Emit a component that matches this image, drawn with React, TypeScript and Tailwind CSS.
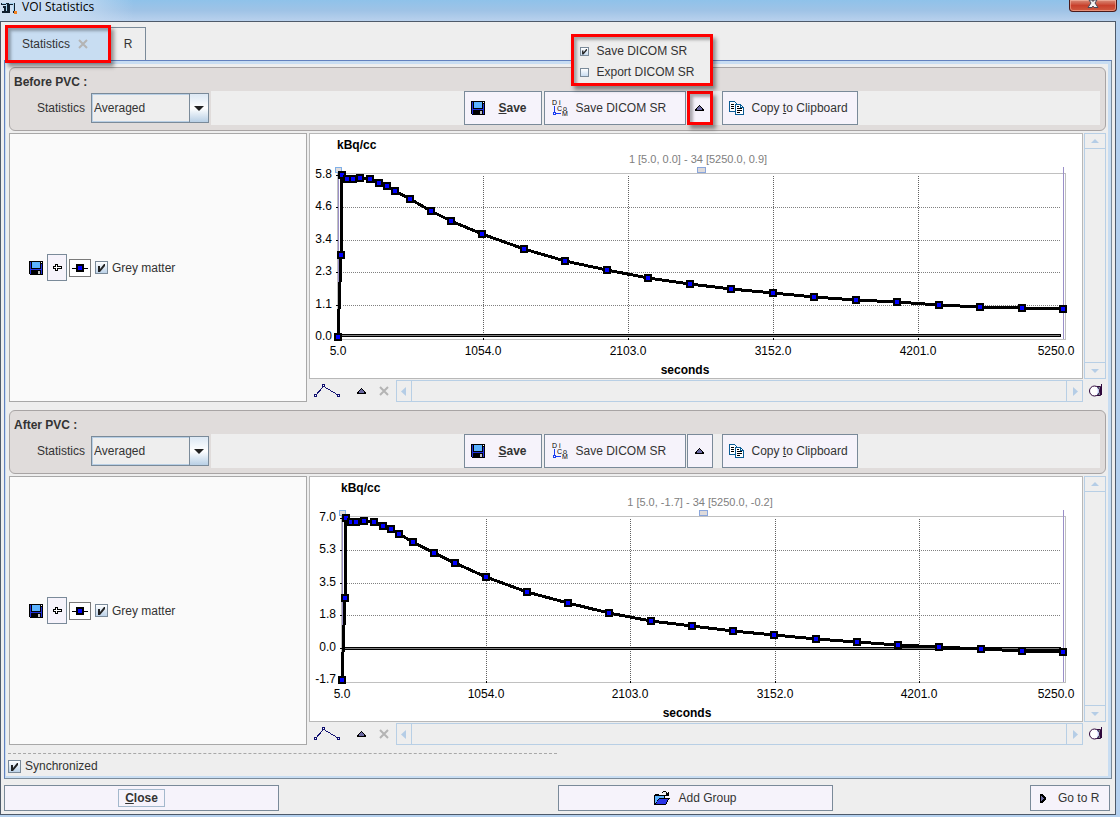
import type { ReactNode } from "react";

type Point = [number, number];

interface ChartData {
  left: number;
  yLabels: string[];
  grid: number[];
  xTicks: number[];
  zeroY: number;
  range: string;
  center: number;
  points: Point[];
}

const xLabels = ["5.0", "1054.0", "2103.0", "3152.0", "4201.0", "5250.0"];
const labelBaselines = [44, 76, 109, 141, 174, 206];

const beforeChart: ChartData = {
  left: 28,
  yLabels: ["5.8", "4.6", "3.4", "2.3", "1.1", "0.0"],
  grid: [73, 106, 138, 171],
  xTicks: [173, 318, 463, 608],
  zeroY: 201,
  range: "1 [5.0, 0.0] - 34 [5250.0, 0.9]",
  center: 388,
  points: [
    [28, 203], [31, 121], [32, 41], [37, 45], [43, 45], [50, 44], [60, 45],
    [69, 49], [77, 52], [85, 57], [100, 65], [121, 77], [141, 87], [172, 100],
    [214, 115], [255, 127], [297, 136], [338, 144], [380, 150], [421, 155],
    [463, 159], [504, 163], [546, 166], [587, 168], [629, 171], [670, 173],
    [712, 174], [753, 175],
  ],
};

const afterChart: ChartData = {
  left: 32,
  yLabels: ["7.0", "5.3", "3.5", "1.8", "0.0", "-1.7"],
  grid: [73, 106, 138],
  xTicks: [176, 320, 465, 609],
  zeroY: 171,
  range: "1 [5.0, -1.7] - 34 [5250.0, -0.2]",
  center: 390,
  points: [
    [32, 203], [35, 121], [36, 41], [41, 45], [46, 45], [54, 44], [64, 45],
    [73, 49], [81, 52], [89, 57], [103, 65], [124, 76], [145, 86], [176, 100],
    [217, 115], [258, 126], [299, 136], [341, 144], [382, 149], [423, 154],
    [464, 158], [506, 162], [547, 165], [588, 168], [629, 170], [671, 172],
    [712, 174], [753, 175],
  ],
};

const Chart = ({ data }: { data: ChartData }) => {
  const { left, points, zeroY, center } = data;
  const labelX = [left, ...data.xTicks, 746];
  return (
    <svg viewBox="0 0 772 244" className="block h-auto w-full text-[12px]" role="img">
      <g shapeRendering="crispEdges">
        <rect x={left - 0.5} y="39.5" width={756 - left} height="166" fill="none" stroke="#c0c0c0" />
        {data.grid.map((y) => (
          <line key={y} x1={left + 5} x2="751" y1={y + 0.5} y2={y + 0.5} stroke="#808080" strokeDasharray="1 1" />
        ))}
        {data.xTicks.map((x) => (
          <g key={x}>
            <line x1={x + 0.5} x2={x + 0.5} y1="42" y2="204" stroke="#606060" strokeDasharray="1 1" />
            <line x1={x + 0.5} x2={x + 0.5} y1="204" y2="206" stroke="#000" />
          </g>
        ))}
        {[41, ...data.grid, 171].map((y, i) => (
          <line key={i} x1={left - 2} x2={left} y1={y + 0.5} y2={y + 0.5} stroke="#000" />
        ))}
        <rect x={left} y={zeroY - 1} width={751 - left} height="3" fill="#000" />
        <rect x={left} y={zeroY} width={750 - left} height="1" fill="#808080" />
        <line x1={left + 0.5} x2={left + 0.5} y1="39" y2="204" stroke="#9a8fc8" />
        <line x1="753.5" x2="753.5" y1="33" y2="205" stroke="#9a8fc8" />
        <rect x={left - 2.5} y="33.5" width="6" height="5" fill="#e0dcdc" stroke="#7fb0e8" />
        <rect x={center - 0.5} y="33.5" width="8" height="5" fill="#dedada" stroke="#8aa6dc" />
        <polyline points={points.map((p) => p.join(",")).join(" ")} fill="none" stroke="#000" strokeWidth="3" />
        {points.map(([x, y]) => (
          <g key={x}>
            <rect x={x - 4} y={y - 4} width="8" height="8" fill="#000" />
            <rect x={x - 2} y={y - 2} width="4" height="4" fill="#0000ff" />
          </g>
        ))}
      </g>
      <text x={left - 1} y="15" fontWeight="bold">kBq/cc</text>
      <text x={center} y="29" textAnchor="middle" className="text-[11px]" fill="#808080">{data.range}</text>
      {data.yLabels.map((label, i) => (
        <text key={label} x={left - 6} y={labelBaselines[i]} textAnchor="end">{label}</text>
      ))}
      {xLabels.map((label, i) => (
        <text key={label} x={labelX[i]} y="221" textAnchor="middle">{label}</text>
      ))}
      <text x={center - 13} y="240" textAnchor="middle" fontWeight="bold">seconds</text>
    </svg>
  );
};

const FloppyIcon = () => (
  <svg width="14" height="14" viewBox="0 0 14 14" shapeRendering="crispEdges" className="shrink-0">
    <path d="M0 0h14v14H1v-1H0z" fill="#000" />
    <path d="M1 1h1v12H1zM12 3h1v10h-1zM2 8h10v1H2z" fill="#2233dd" />
    <path d="M3 1h8v6H3z" fill="#5cb3ff" />
    <path d="M12 1h1v1h-1z" fill="#fff" />
    <path d="M9 10h2v3H9z" fill="#c0c0c0" />
  </svg>
);

const DicomIcon = () => (
  <svg width="16" height="16" viewBox="0 0 16 16" className="shrink-0">
    <g fontSize="7" fontFamily="Liberation Sans, sans-serif" fill="#000">
      <text x="0" y="5">D</text>
      <text x="7" y="5">i</text>
      <text x="5" y="11">C</text>
      <text x="11" y="11">o</text>
      <text x="10" y="16">M</text>
    </g>
    <path d="M2 6h1v6h1v1h5v1H4v1H1v-3h1z" fill="#1a3cf0" shapeRendering="crispEdges" />
    <path d="M2 13h1v1H2z" fill="#fff" shapeRendering="crispEdges" />
  </svg>
);

const CopyIcon = () => (
  <svg width="16" height="15" viewBox="0 0 16 15" shapeRendering="crispEdges" className="shrink-0">
    <path d="M.5.5h5l2 2v8h-7z" fill="#fff" stroke="#0a5c94" />
    <path d="M2 3h3M2 5h3M2 7h3" stroke="#000" transform="translate(0 .5)" />
    <path d="M6.500 3.500h5l3 3v7h-8z" fill="#fff" stroke="#0a5c94" />
    <path d="M11.500 3.500v3h3" fill="none" stroke="#0a5c94" />
    <path d="M8 6h2M8 8h5M8 10h5M8 12h3" stroke="#000" transform="translate(0 -.5)" />
  </svg>
);

const FolderIcon = () => (
  <svg width="16" height="14" viewBox="0 0 16 14" shapeRendering="crispEdges" className="shrink-0">
    <path d="M0 4h1V3h4v1h6v3h5v1h-1v1h-1v2h-1v2h-1v1H0z" fill="#000" />
    <path d="M1 5h9v2H5v1H4v1H3v2H2v1H1z" fill="#5cb3ff" />
    <path d="M5 8h9v1h-1v2h-1v2H2v-1h1v-2h1V9h1z" fill="#2a35e8" />
    <path d="M8 1h1V0h3v1h1v1h1V1h1v4h-4V4h1V3h-1V1H9v1H8z" fill="#000" />
    <path d="M9 1h3v2H9z" fill="#eee" />
  </svg>
);

const UpIcon = () => (
  <svg width="9" height="6" viewBox="0 0 9 6" shapeRendering="crispEdges" className="shrink-0">
    <path d="M4 0h1v1h1v1h1v1h1v1h1v2H0V4h1V3h1V2h1V1h1z" fill="#000" />
    <path d="M4 1h1v1h1v1h1v2H2V3h1V2h1z" fill="#6a68a0" />
  </svg>
);

const CrossIcon = () => (
  <svg width="10" height="10" viewBox="0 0 10 10" className="shrink-0">
    <path d="M1 1l8 8M9 1L1 9" stroke="#b4b4b4" strokeWidth="2" />
  </svg>
);

const CurveIcon = () => (
  <svg width="27" height="14" viewBox="0 0 27 14" shapeRendering="crispEdges" className="shrink-0">
    <path d="M2 11L9 3M9 2l15 9" stroke="#101070" fill="none" />
    <path d="M.5 10.500h2v2h-2zM8.500.5h2v2h-2zM23.500 10.500h2v2h-2z" fill="#fff" stroke="#101070" />
  </svg>
);

const LensIcon = () => (
  <svg width="14" height="14" viewBox="0 0 14 14" className="shrink-0">
    <path d="M6 2.500h5.500v9H6z" fill="#1f6570" stroke="#30083c" />
    <path d="M12.500 0v11" stroke="#30083c" />
    <path d="M10.500 3v8" stroke="#8a8a90" />
    <circle cx="5.500" cy="7" r="5" fill="#fff" stroke="#30083c" />
    <path d="M8 4a4 4 0 0 1 0 6" fill="none" stroke="#b8c8f8" />
  </svg>
);

const ArrowGlyph = ({ dir }: { dir: "up" | "down" | "left" | "right" }) => {
  const shapes = {
    up: "M0 6l4-4 4 4z",
    down: "M0 3h8L4 7z",
    left: "M6 0v9L1 4.500z",
    right: "M2 0v9l5-4.500z",
  };
  return (
    <svg width="8" height="9" viewBox="0 0 8 9" className="shrink-0">
      <path d={shapes[dir]} fill="#b5cde6" />
    </svg>
  );
};

interface CheckBoxProps {
  label: string;
  checked?: boolean;
  small?: boolean;
}

const CheckBox = ({ label, checked = false, small = false }: CheckBoxProps) => (
  <label className={small ? "flex items-center gap-2" : "flex items-center gap-1"}>
    <span className="relative flex shrink-0">
      <input
        type="checkbox"
        defaultChecked={checked}
        className={
          small
            ? "peer size-[9px] appearance-none border border-[#7a8a99] bg-linear-to-b from-white to-[#c8dcf0]"
            : "peer size-[13px] appearance-none border border-[#7a8a99] bg-linear-to-b from-white to-[#bcd2e8]"
        }
      />
      <svg viewBox="0 0 13 13" className="pointer-events-none absolute inset-0 hidden size-full peer-checked:block">
        <path d="M3 5h2v3l4-5h1v2l-5 6H3z" fill="#222" />
      </svg>
    </span>
    {label}
  </label>
);

const ToolButton = ({ children, className = "" }: { children: ReactNode; className?: string }) => (
  <button
    type="button"
    className={`flex h-[34px] items-center border border-[#7a8a99] bg-[#f6f3fb] whitespace-nowrap ${className}`}
  >
    {children}
  </button>
);

const DicomMenu = () => (
  <div className="absolute right-0 bottom-full z-10 mb-[5px] flex w-[142px] flex-col gap-[5px] border-3 border-[#ff0000] bg-[#eeeeee] px-[6px] pt-[6px] pb-[3px] shadow-[3px_4px_4px_rgba(0,0,0,0.4),inset_3px_3px_3px_rgba(0,0,0,0.3)]">
    <CheckBox label="Save DICOM SR" checked small />
    <CheckBox label="Export DICOM SR" small />
  </div>
);

const GroupHeader = ({ title, id, menuOpen = false }: { title: string; id: string; menuOpen?: boolean }) => (
  <div className="rounded-md border border-[#a8a4a4] bg-[#e0dcdb] pr-[5px] pb-[5px] pl-1">
    <h2 className="h-[23px] pt-[6px] font-bold">{title}</h2>
    <div className="flex items-center">
      <label htmlFor={id} className="w-[77px] pr-[6px] text-right">Statistics</label>
      <div className="relative h-[30px] w-[118px] shrink-0 border border-[#7a8a99]">
        <select
          id={id}
          className="size-full appearance-none border border-[#b8cfe5] bg-[#eeeeee] pb-px pl-px outline-none"
        >
          <option>Averaged</option>
        </select>
        <span className="pointer-events-none absolute inset-y-0 right-0 flex w-[19px] items-center justify-center border-l border-[#7a8a99] bg-linear-to-b from-[#dce8f4] via-white to-[#b8cfe5]">
          <svg width="10" height="5" viewBox="0 0 10 5">
            <path d="M0 0h10L5 5z" fill="#222" />
          </svg>
        </span>
      </div>
      <div className="ml-[2px] flex h-[34px] flex-1 justify-center bg-[#eeeeee] pl-[10px]">
        <ToolButton className="w-[78px] pl-[6px] font-bold">
          <FloppyIcon />
          <span className="pl-[14px]"><u>S</u>ave</span>
        </ToolButton>
        <ToolButton className="ml-[2px] w-[142px] gap-2 pl-[7px]">
          <DicomIcon />
          Save DICOM SR
        </ToolButton>
        <div className="relative ml-px flex">
          <button
            type="button"
            aria-label="DICOM options"
            className={
              menuOpen
                ? "flex h-[34px] w-[26px] items-center justify-center border-3 border-[#ff0000] bg-[#f6f3fb] shadow-[3px_4px_4px_rgba(0,0,0,0.4),inset_3px_3px_3px_rgba(0,0,0,0.3)]"
                : "flex h-[34px] w-[26px] items-center justify-center border border-[#7a8a99] bg-[#f6f3fb]"
            }
          >
            <UpIcon />
          </button>
          {menuOpen && <DicomMenu />}
        </div>
        <ToolButton className="ml-[9px] w-[136px] gap-[7px] pl-[6px]">
          <CopyIcon />
          <span>Copy <u>t</u>o Clipboard</span>
        </ToolButton>
      </div>
    </div>
  </div>
);

const GroupBody = ({ data }: { data: ChartData }) => (
  <div className="mt-[2px] flex gap-[2px]">
    <div className="flex w-[298px] shrink-0 items-center border border-[#a8a8a8] bg-[#fafafa] pl-[19px]">
      <button type="button" aria-label="Save curve">
        <FloppyIcon />
      </button>
      <button
        type="button"
        aria-label="Move curve"
        className="ml-1 flex h-[27px] w-5 items-center justify-center border border-[#7a8a99] bg-[#f6f3fb]"
      >
        <svg width="11" height="9" viewBox="0 0 11 9" shapeRendering="crispEdges">
          <path d="M3.500 1.500h2v2h4v2h-4v2h-2v-2h-2v-2h2z" fill="#fff" stroke="#000" />
        </svg>
      </button>
      <button
        type="button"
        aria-label="Curve style"
        className="mr-1 ml-[2px] flex h-[18px] w-[22px] items-center justify-center border border-[#7a7a7a] bg-white"
      >
        <svg width="16" height="8" viewBox="0 0 16 8" shapeRendering="crispEdges">
          <path d="M0 4h16v1H0zM4 0h8v8H4z" fill="#000" />
          <path d="M6 2h4v4H6z" fill="#0000ff" />
        </svg>
      </button>
      <CheckBox label="Grey matter" checked />
    </div>
    <div className="flex min-w-0 flex-1 flex-col gap-px">
      <div className="flex gap-px">
        <div className="min-w-0 flex-1 border border-[#b8b8b8] bg-white">
          <Chart data={data} />
        </div>
        <div className="flex w-[22px] flex-col justify-between border border-[#b8cfe5]">
          <button type="button" aria-label="Scroll up" className="flex h-[15px] items-center justify-center border-b border-[#b8cfe5]">
            <ArrowGlyph dir="up" />
          </button>
          <button type="button" aria-label="Scroll down" className="flex h-4 items-center justify-center border-t border-[#b8cfe5]">
            <ArrowGlyph dir="down" />
          </button>
        </div>
      </div>
      <div className="flex h-[22px] items-center pl-[5px]">
        <button type="button" aria-label="Curve"><CurveIcon /></button>
        <button type="button" aria-label="Curve options" className="ml-4"><UpIcon /></button>
        <button type="button" aria-label="Remove curve" className="mr-[7px] ml-[13px]"><CrossIcon /></button>
        <div className="flex h-full flex-1 justify-between border border-[#b8cfe5]">
          <button type="button" aria-label="Scroll left" className="flex w-[15px] items-center justify-center border-r border-[#b8cfe5]">
            <ArrowGlyph dir="left" />
          </button>
          <button type="button" aria-label="Scroll right" className="flex w-4 items-center justify-center border-l border-[#b8cfe5]">
            <ArrowGlyph dir="right" />
          </button>
        </div>
        <button type="button" aria-label="Properties" className="mr-[3px] ml-[6px]"><LensIcon /></button>
      </div>
    </div>
  </div>
);

const TitleBar = () => (
  <header className="flex h-[21px] items-start justify-between bg-linear-to-b from-[#8fc2ea] via-[#9fc3e6] to-[#b9d1ed]">
    <div className="flex h-full items-start gap-[5px] bg-linear-to-r from-[#cfe0f2] via-[#c8dcf2] to-transparent pr-10">
      <svg width="17" height="12" viewBox="0 0 17 12" shapeRendering="crispEdges" className="mt-[2px]">
        <path d="M1 1.500h6v8H2M3 4.500h2v5M9 10.500v-9h5v8h2M9 1.500h5" fill="none" stroke="#102030" strokeWidth="2" />
        <path d="M2 1h4v1H2zM6 2h1v7H6zM9 1h5v1H9zM13 2h1v7h-1z" fill="#a8d4f0" />
        <path d="M14 9h3v3h-3z" fill="#f08020" />
      </svg>
      <span className="font-['Open_Sans',sans-serif] text-[12px] leading-[14px] text-black">VOI Statistics</span>
    </div>
    <button
      type="button"
      aria-label="Close window"
      className="mr-[3px] flex h-3 w-12 justify-center rounded-b border border-t-0 border-[#4a1a1a] bg-linear-to-b from-[#d88a78] via-[#c8402c] to-[#d05a40] shadow-[inset_0_0_0_1px_rgba(255,200,180,0.5)]"
    >
      <svg width="12" height="8" viewBox="0 0 12 8">
        <path d="M1 7.500h4L6 6l1 1.500h4L8 3l2-3H7L6 1.500 5 0H2l2 3z" fill="#f4f4f4" stroke="#4a4a58" />
      </svg>
    </button>
  </header>
);

export default function App() {
  return (
    <div className="flex min-h-screen flex-col bg-[#b4d0ee] pb-[2px] font-['Liberation_Sans',Arial,sans-serif] text-[12px] leading-4 text-[#333333]">
      <TitleBar />
      <div className="mr-1 flex flex-1 flex-col border border-[#4e5a6a] bg-[#eeeeee] px-[3px] pt-[5px] pb-[3px]">
        <nav className="flex h-[33px] items-end">
          <div className="relative z-10 -mb-[3px] ml-px flex h-[38px] w-[106px] items-center gap-2 self-end border-3 border-[#ff0000] bg-[#c8ddf2] pl-[14px] shadow-[3px_4px_4px_rgba(0,0,0,0.4),inset_3px_3px_3px_rgba(0,0,0,0.3)]">
            <button type="button">Statistics</button>
            <button type="button" aria-label="Close tab"><CrossIcon /></button>
          </div>
          <button type="button" className="h-[33px] w-[35px] border-t border-r border-[#7a8a99]">R</button>
        </nav>
        <main className="flex flex-1 flex-col border border-t-[#6382bf] border-r-[#7a8a99] border-b-[#7a8a99] border-l-[#6382bf] pt-[6px] pr-[5px] pb-1 pl-1 shadow-[inset_1px_3px_0_#c8ddf2,inset_-3px_-2px_0_#c8ddf2]">
          <GroupHeader title="Before PVC :" id="stats-before" menuOpen />
          <GroupBody data={beforeChart} />
          <div className="mt-2">
            <GroupHeader title="After PVC :" id="stats-after" />
            <GroupBody data={afterChart} />
          </div>
          <div className="mt-2 -ml-px w-1/2 border-t border-dashed border-[#a8a8a8]" />
          <div className="mt-1 -ml-px flex">
            <CheckBox label="Synchronized" checked />
          </div>
        </main>
        <footer className="mt-[6px] mr-[2px] grid grid-cols-4 gap-[2px]">
          <button type="button" className="flex h-[26px] items-center justify-center border border-[#7a8a99] bg-[#f6f3fb] font-bold">
            <span className="border border-[#a3b8cc] px-[6px]"><u>C</u>lose</span>
          </button>
          <button type="button" className="col-start-3 flex h-[26px] items-center justify-center gap-2 border border-[#7a8a99] bg-[#f6f3fb]">
            <FolderIcon />
            Add Group
          </button>
          <button type="button" className="flex h-[26px] w-20 items-center gap-3 justify-self-end border border-[#7a8a99] bg-[#f6f3fb] pl-[9px]">
            <svg width="6" height="9" viewBox="0 0 6 9" shapeRendering="crispEdges">
              <path d="M0 0h2l4 4v1L2 9H0z" fill="#000" />
              <path d="M1 2l3 2.500L1 7z" fill="#6a68a0" />
            </svg>
            Go to R
          </button>
        </footer>
      </div>
    </div>
  );
}
